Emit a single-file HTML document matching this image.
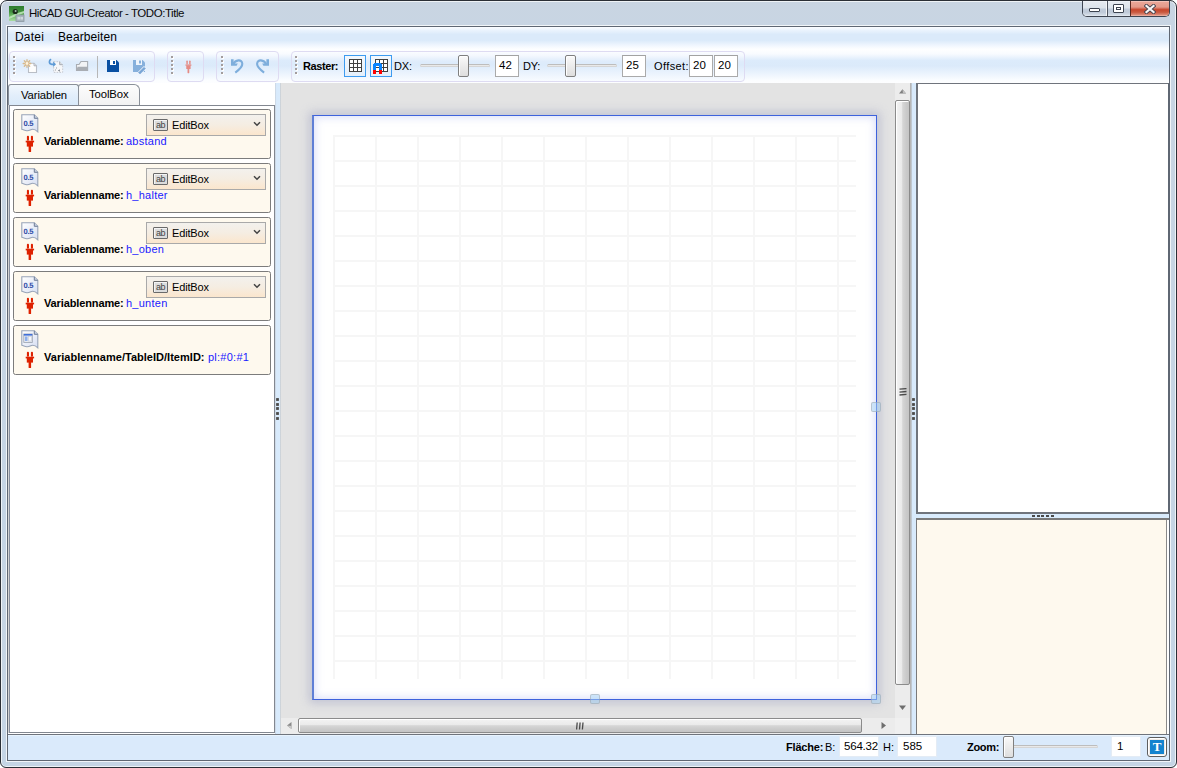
<!DOCTYPE html>
<html><head><meta charset="utf-8">
<style>
*{margin:0;padding:0;box-sizing:border-box}
html,body{width:1177px;height:768px;overflow:hidden;background:#fff;font-family:"Liberation Sans",sans-serif;font-size:11px;color:#000}
.a{position:absolute}
.t{position:absolute;white-space:nowrap;line-height:1}
#frame{left:0;top:0;width:1177px;height:768px;border:1px solid #2b2f36;border-radius:7px 7px 6px 6px;
 background:linear-gradient(180deg,#c9d5e2 0px,#c8d5e3 26px,#c5d5e5 100%);box-shadow:inset 0 0 0 1px rgba(255,255,255,.7)}
#client{left:7px;top:26px;width:1163px;height:735px;border:1px solid #5f6773;background:#fff}
#menubar{left:8px;top:27px;width:1161px;height:23px;background:linear-gradient(180deg,#fbfdff 0%,#eaf3fd 15%,#dbeafa 32%,#dbeafa 58%,#f0f6fe 80%,#fdfeff 96%)}
#tray{left:8px;top:50px;width:1161px;height:33px;background:linear-gradient(180deg,#fdfeff 0%,#f8fbff 12%,#dcebfb 32%,#dbeafa 48%,#eaf3fd 70%,#fbfdff 92%,#fdfeff 100%)}
.tb{position:absolute;top:51px;height:31px;border:1px solid #dedbf2;border-radius:4px;background:linear-gradient(180deg,#fafcff 0%,#f4f8fe 12%,#dfecfb 32%,#dcebfb 45%,#e9f2fd 70%,#f8fbff 100%)}
.grip{position:absolute;top:4px;width:3px;height:19px;background:repeating-linear-gradient(180deg,#a39d9d 0 2px,transparent 2px 4px) 0 0/2px 100% no-repeat,repeating-linear-gradient(180deg,transparent 0 1px,#fff 1px 3px,transparent 3px 4px) 1px 0/2px 100% no-repeat}
.btn{width:22px;height:22px;border:1px solid #3d9bf0;background:linear-gradient(180deg,#f3f8fd,#e3effb)}
.track{height:3px;border:1px solid #d5d5d5;border-radius:2px;background:#e9e9e9;border-top-color:#bdbdbd}
.thumb{width:11px;height:22px;border:1px solid #7f7f7f;border-radius:2px;background:linear-gradient(180deg,#fafafa 0%,#eeeeee 40%,#dedede 100%);box-shadow:inset 1px 1px 0 #fff}
.tbox{height:22px;border:1px solid #aaa;border-top-color:#a2a2a2;background:#fff;font-size:11.5px;line-height:19px;padding-left:3px;white-space:nowrap;overflow:hidden}
.handle{width:10px;height:10px;border:1px solid rgba(150,150,150,0.4);border-radius:2px;background:rgba(165,212,245,0.5)}
.vthumb{border:1px solid #8b8b8b;border-radius:2px;background:linear-gradient(90deg,#f3f3f3 0%,#ebebeb 42%,#d6d6d6 52%,#cacaca 80%,#c5c5c5 100%);box-shadow:inset 1px 1px 0 #fff}
.hthumb{border:1px solid #8b8b8b;border-radius:2px;background:linear-gradient(180deg,#f3f3f3 0%,#ebebeb 42%,#d6d6d6 52%,#cacaca 80%,#c5c5c5 100%);box-shadow:inset 1px 1px 0 #fff}
.card{left:13px;width:258px;height:50px;border:1px solid #7c7c7c;border-radius:2.5px;background:#fef9ee}
.lbl{font-size:11px;font-weight:bold;letter-spacing:-0.12px;color:#000}
.val{font-size:11px;color:#1a1aff;letter-spacing:0.25px}
.combo{width:120px;height:22px;border:1px solid #a9a9a9;background:linear-gradient(180deg,#f3f1ed 0%,#f5ede2 50%,#fbe6cd 100%)}
.abicon{left:6px;top:4px;width:15px;height:12px;border:1.5px solid #6a6a6a;border-radius:1px;background:#dcdcdc;font-size:9px;line-height:10px;color:#444;text-align:center;box-shadow:inset 1px 1px 0 #f4f4f4;letter-spacing:-0.5px}
.gdot{width:3px;height:3px;border-radius:1px;background:#4a4a4a;box-shadow:inset 0 0 0 0.6px #666}
.gdot2{width:3px;height:2px;background:#4a4a4a}
</style></head><body>
<div id="frame" class="a"></div>
<div class="a" style="left:6px;top:25px;width:1165px;height:737px;border:1px solid rgba(255,255,255,0.75)"></div>
<div id="client" class="a"></div>
<div id="menubar" class="a"></div>
<div id="tray" class="a"></div>

<!-- title -->
<svg class="a" style="left:9px;top:6px" width="16" height="16" viewBox="0 0 16 16">
<defs><linearGradient id="gi" x1="0" y1="0" x2="0" y2="1"><stop offset="0" stop-color="#2e7d2e"/><stop offset="0.35" stop-color="#3f8f3c"/><stop offset="0.6" stop-color="#66b35f"/><stop offset="1" stop-color="#a9dca3"/></linearGradient></defs>
<rect x="0" y="0" width="15" height="15" fill="url(#gi)"/>
<path d="M0 11 C4 9 8 7 15 5 L15 7 C9 9 5 11 0 13z" fill="#c8ecc4" opacity="0.8"/>
<circle cx="6.2" cy="5.5" r="2.6" fill="#1b2b1b"/><circle cx="6.6" cy="5" r="1" fill="#dfe" opacity="0.7"/>
<rect x="7" y="9" width="8" height="6.5" fill="#a8b4bd" stroke="#8c98a2" stroke-width="0.8"/>
<rect x="8.5" y="11" width="3" height="2.5" fill="#cfd7dd"/><rect x="12" y="11" width="2" height="2.5" fill="#cfd7dd"/>
</svg>
<div class="t" style="left:29px;top:8px;font-size:11.5px;letter-spacing:-0.45px;color:#0a0a0a">HiCAD GUI-Creator - TODO:Title</div>
<!-- caption buttons -->
<div class="a" style="left:1082px;top:1px;width:88px;height:16px;border:1px solid #3f4652;border-top:none;border-radius:0 0 5px 5px;overflow:hidden;background:#fff">
  <div class="a" style="left:0;top:0;width:24px;height:15px;background:linear-gradient(180deg,#f3f6f9 0%,#e4e9ef 10%,#dde4eb 45%,#c1ccda 55%,#bfcad8 75%,#d3dce6 92%,#e6ecf2 100%);border-right:1px solid #f4f6f8"></div>
  <div class="a" style="left:24px;top:0;width:23px;height:15px;border-left:1px solid #4e5560;background:linear-gradient(180deg,#f3f6f9 0%,#e4e9ef 10%,#dde4eb 45%,#c1ccda 55%,#bfcad8 75%,#d3dce6 92%,#e6ecf2 100%)"></div>
  <div class="a" style="left:47px;top:0;width:41px;height:15px;border-left:1px solid #5b2a22;background:linear-gradient(180deg,#f7d0c8 0%,#e9a596 10%,#e39a8a 40%,#c7472d 58%,#c95a40 75%,#d98470 90%,#efbcae 100%)"></div>
  <div class="a" style="left:6px;top:7px;width:11px;height:4px;border:1px solid #3d4450;background:#fff;border-radius:1px"></div>
  <div class="a" style="left:30px;top:3px;width:11px;height:9px;border:1px solid #3d4450;background:#fff;border-radius:1px"><div class="a" style="left:2px;top:2px;width:5px;height:3px;border:1px solid #3d4450"></div></div>
  <svg class="a" style="left:61px;top:3px" width="12" height="10" viewBox="0 0 12 10"><path d="M2.5 2 L9.5 8 M9.5 2 L2.5 8" stroke="#4a4750" stroke-width="4" stroke-linecap="square"/><path d="M2.5 2 L9.5 8 M9.5 2 L2.5 8" stroke="#f6f6f6" stroke-width="2.2" stroke-linecap="square"/></svg>
</div>
<!-- menu -->
<div class="t" style="left:15px;top:31px;font-size:12px;letter-spacing:0.2px">Datei</div>
<div class="t" style="left:58px;top:31px;font-size:12px;letter-spacing:0.1px">Bearbeiten</div>

<!-- toolbar 1 -->
<div class="tb" style="left:9px;width:146px">
  <div class="grip" style="left:3px"></div>
  <!-- new -->
  <svg class="a" style="left:12px;top:6px" width="16" height="16" viewBox="0 0 16 16">
    <path d="M6.5 5.3 h5.5 l2.5 2.5 v6.7 h-8z" fill="#fdfdfd" stroke="#b9bec6" stroke-width="1.1"/>
    <path d="M12 5.3 v2.5 h2.5" fill="#e6e8ec" stroke="#a8adb6" stroke-width="0.9"/>
    <g stroke="#d9b98a" stroke-width="1.3" stroke-linecap="round"><path d="M5 1.7v7.6M1.2 5.5h7.6M2.3 2.8l5.4 5.4M7.7 2.8l-5.4 5.4"/></g>
    <circle cx="5" cy="5.5" r="1.4" fill="#fff3dc"/>
  </svg>
  <!-- copy/move -->
  <svg class="a" style="left:38px;top:6px" width="17" height="17" viewBox="0 0 17 17">
    <path d="M5.7 3.7 h6 l3 3 v7.7 h-9z" fill="#f6f7f9" stroke="#c5c9d0" stroke-width="1" stroke-dasharray="1.6 1.2"/>
    <path d="M11.7 3.7 v3 h3" fill="#dfe2e6" stroke="#9ea4ad" stroke-width="0.9"/>
    <path d="M8 10h1M7 12h1M10 12.5h2M11.5 11.5v2" stroke="#8e949c" stroke-width="0.9"/>
    <path d="M3.2 1.3 C0.8 2 0.6 6 3.8 6.3 H6" fill="none" stroke="#5d9ad6" stroke-width="1.7"/>
    <path d="M5.2 3.6 L8 6.3 L5.2 9z" fill="#5d9ad6"/>
  </svg>
  <!-- open -->
  <svg class="a" style="left:65px;top:8px" width="14" height="12" viewBox="0 0 14 12">
    <path d="M1.5 10.5 V4.5 H4 L6 1.5 H12.6 V10.5z" fill="#f2f3f5" stroke="#a9adb3" stroke-width="1.1"/>
    <path d="M1.2 10.6 L2.6 6.8 H12.8 V10.6z" fill="#a9adb3"/>
  </svg>
  <div class="a" style="left:87px;top:4px;width:1px;height:22px;background:#b7b7b7"></div>
  <!-- save -->
  <svg class="a" style="left:97px;top:8px" width="12" height="12" viewBox="0 0 12 12" shape-rendering="crispEdges">
    <path d="M0 0h9.5l2.5 2.5v9.5h-12z" fill="#0a50a2" shape-rendering="auto"/>
    <rect x="3" y="0" width="6" height="5" fill="#fff"/><rect x="6" y="0.5" width="2" height="3" fill="#0a50a2"/>
  </svg>
  <!-- save as -->
  <svg class="a" style="left:123px;top:8px" width="14" height="14" viewBox="0 0 14 14">
    <path d="M0 0h9.5l2.5 2.5v9.5h-12z" fill="#86b0dc"/>
    <rect x="3" y="0" width="6" height="5" fill="#eef4fb"/><rect x="6" y="0.5" width="2" height="3" fill="#86b0dc"/>
    <path d="M4.8 12.6 L11 6.4 L13.2 8.6 L7 14.8z" fill="#7aa6d6" stroke="#f2f7fd" stroke-width="1"/>
  </svg>
</div>
<!-- toolbar 2 -->
<div class="tb" style="left:167px;width:37px">
  <div class="grip" style="left:3px"></div>
  <svg class="a" style="left:17px;top:8px" width="7" height="14" viewBox="0 0 10 18" preserveAspectRatio="none"><g fill="#e58b85"><rect x="1.9" y="0.7" width="2.1" height="5" rx="1"/><rect x="5.9" y="0.7" width="2.1" height="5" rx="1"/><rect x="0.7" y="5.7" width="8.4" height="1.7"/><rect x="1.8" y="7" width="6.2" height="4.6"/><rect x="3.6" y="11" width="2.5" height="6" rx="0.6"/></g></svg>
</div>
<!-- toolbar 3 -->
<div class="tb" style="left:216px;width:63px">
  <div class="grip" style="left:4px"></div>
  <svg class="a" style="left:13px;top:6px" width="14" height="16" viewBox="0 0 14 16">
    <path d="M3 6.5 C5.5 1.5 12 0.8 12.3 5.8 C12.5 8.5 9.5 11.5 5.3 14.6" fill="none" stroke="#7eaedc" stroke-width="2.1"/>
    <path d="M1 1.2 L3.6 1.2 L3.6 5.4 L7.8 5.4 L6.6 7.8 L1 7.8Z" fill="#7eaedc"/>
  </svg>
  <svg class="a" style="left:39px;top:6px" width="14" height="16" viewBox="0 0 14 16">
    <g transform="translate(14,0) scale(-1,1)">
    <path d="M3 6.5 C5.5 1.5 12 0.8 12.3 5.8 C12.5 8.5 9.5 11.5 5.3 14.6" fill="none" stroke="#7eaedc" stroke-width="2.1" transform="translate(0.6,0) scale(1,1)"/>
    <path d="M1 1.2 L3.6 1.2 L3.6 5.4 L7.8 5.4 L6.6 7.8 L1 7.8Z" fill="#7eaedc"/>
    </g>
  </svg>
</div>
<!-- toolbar 4 -->
<div class="tb" style="left:291px;width:454px">
  <div class="grip" style="left:3px"></div>
</div>
<div class="t" style="left:303px;top:61px;font-size:11px;font-weight:bold;letter-spacing:-0.4px">Raster:</div>
<div class="a btn" style="left:344px;top:55px"></div>
<div class="a btn" style="left:370px;top:55px"></div>
<svg class="a" style="left:349px;top:59px" width="13" height="13" viewBox="0 0 13 13" shape-rendering="crispEdges"><rect width="13" height="13" fill="#414141"/><g fill="#fff"><rect x="1" y="1" width="3" height="3"/><rect x="5" y="1" width="3" height="3"/><rect x="9" y="1" width="3" height="3"/><rect x="1" y="5" width="3" height="3"/><rect x="5" y="5" width="3" height="3"/><rect x="9" y="5" width="3" height="3"/><rect x="1" y="9" width="3" height="3"/><rect x="5" y="9" width="3" height="3"/><rect x="9" y="9" width="3" height="3"/></g></svg>
<svg class="a" style="left:372px;top:59px" width="16" height="16" viewBox="0 0 16 16" shape-rendering="crispEdges"><rect x="3" y="0" width="13" height="13" fill="#414141"/><g fill="#fff"><rect x="4" y="1" width="3" height="3"/><rect x="8" y="1" width="3" height="3"/><rect x="12" y="1" width="3" height="3"/><rect x="4" y="5" width="3" height="3"/><rect x="8" y="5" width="3" height="3"/><rect x="12" y="5" width="3" height="3"/><rect x="4" y="9" width="3" height="3"/><rect x="8" y="9" width="3" height="3"/><rect x="12" y="9" width="3" height="3"/></g>
<path d="M1 11 V6.5 Q1 4 3.5 4 H7.5 Q10 4 10 6.5 V11 H7 V7 H4 V11z" fill="#0a84ff"/><rect x="1" y="11" width="3" height="4" fill="#f00"/><rect x="7" y="11" width="3" height="4" fill="#f00"/></svg>
<div class="t" style="left:394px;top:61px;font-size:11px;letter-spacing:-0.2px">DX:</div>
<div class="a track" style="left:420px;top:64px;width:70px"></div>
<div class="a thumb" style="left:458px;top:55px"></div>
<div class="a tbox" style="left:495px;top:55px;width:24px">42</div>
<div class="t" style="left:523px;top:61px;font-size:11px;letter-spacing:-0.2px">DY:</div>
<div class="a track" style="left:547px;top:64px;width:70px"></div>
<div class="a thumb" style="left:565px;top:55px"></div>
<div class="a tbox" style="left:622px;top:55px;width:24px">25</div>
<div class="t" style="left:654px;top:61px;font-size:11px;letter-spacing:0.4px">Offset:</div>
<div class="a tbox" style="left:689px;top:55px;width:24px">20</div>
<div class="a tbox" style="left:714px;top:55px;width:24px">20</div>


<!-- left panel -->
<div class="a" style="left:8px;top:83px;width:267px;height:651px;background:#fff"></div>
<div class="a" style="left:8px;top:84px;width:71px;height:22px;border:1px solid #8a9099;border-bottom:none;border-radius:3px 3px 0 0;background:linear-gradient(180deg,#f1f7fd 0%,#e2eefb 50%,#d9eafa 100%)"></div>
<div class="a" style="left:78px;top:84px;width:62px;height:22px;border:1px solid #8a9099;border-bottom:none;border-radius:3px 6px 0 0;background:linear-gradient(180deg,#fdfdfd 0%,#f1f1f1 100%)"></div>
<div class="t" style="left:21px;top:90px;font-size:11.3px;letter-spacing:-0.1px">Variablen</div>
<div class="t" style="left:89px;top:89px;font-size:11.3px;letter-spacing:-0.1px">ToolBox</div>
<div class="a" style="left:8px;top:105px;width:1px;height:628px;background:#d2d2d2"></div><div class="a" style="left:9px;top:105px;width:266px;height:628px;border:1px solid #828790;border-left-color:#8890a0;background:#fff"></div>
<div class="a card" style="top:109px"><svg class="a" style="left:7px;top:4px" width="18" height="19" viewBox="0 0 18 19"><defs><linearGradient id="pg" x1="0" y1="0" x2="1" y2="1"><stop offset="0" stop-color="#ffffff"/><stop offset="1" stop-color="#d6def2"/></linearGradient></defs><path d="M0.8 0.8 h12.5 l3.5 3.5 v13.5 c-1.5 -1.5 -3 -2.5 -5 -2.5 c-2.5 0 -3 1.8 -6 1.5 c-2 -0.3 -3 -1 -5 -1.5z" fill="url(#pg)" stroke="#98a4b8" stroke-width="1.1"/><path d="M13.3 0.8 v3.5 h3.5" fill="#c8d0e0" stroke="#6f7d96" stroke-width="1"/><text x="2.6" y="12" font-family="Liberation Sans" font-weight="bold" font-size="7.6" letter-spacing="-0.3" fill="#2d4aa6" text-rendering="geometricPrecision">0.5</text></svg><svg class="a" style="left:11px;top:25px" width="10" height="18" viewBox="0 0 10 18"><g fill="#de2200"><rect x="1.9" y="0.7" width="2.1" height="5" rx="1"/><rect x="5.9" y="0.7" width="2.1" height="5" rx="1"/><rect x="0.7" y="5.7" width="8.4" height="1.7"/><rect x="1.8" y="7" width="6.2" height="4.6"/><rect x="3.6" y="11" width="2.5" height="6" rx="0.6"/></g></svg><div class="t lbl" style="left:30px;top:26px">Variablenname:</div><div class="t val" style="left:112px;top:26px">abstand</div><div class="a combo" style="left:132px;top:4px"><div class="a abicon"><span>ab</span></div><div class="t" style="left:25px;top:5px;font-size:11px;letter-spacing:-0.15px">EditBox</div><svg class="a" style="left:106px;top:6px" width="8" height="6" viewBox="0 0 8 6"><path d="M1 1.3 L4 4.3 L7 1.3" fill="none" stroke="#444" stroke-width="1.5"/></svg></div></div>
<div class="a card" style="top:163px"><svg class="a" style="left:7px;top:4px" width="18" height="19" viewBox="0 0 18 19"><defs><linearGradient id="pg" x1="0" y1="0" x2="1" y2="1"><stop offset="0" stop-color="#ffffff"/><stop offset="1" stop-color="#d6def2"/></linearGradient></defs><path d="M0.8 0.8 h12.5 l3.5 3.5 v13.5 c-1.5 -1.5 -3 -2.5 -5 -2.5 c-2.5 0 -3 1.8 -6 1.5 c-2 -0.3 -3 -1 -5 -1.5z" fill="url(#pg)" stroke="#98a4b8" stroke-width="1.1"/><path d="M13.3 0.8 v3.5 h3.5" fill="#c8d0e0" stroke="#6f7d96" stroke-width="1"/><text x="2.6" y="12" font-family="Liberation Sans" font-weight="bold" font-size="7.6" letter-spacing="-0.3" fill="#2d4aa6" text-rendering="geometricPrecision">0.5</text></svg><svg class="a" style="left:11px;top:25px" width="10" height="18" viewBox="0 0 10 18"><g fill="#de2200"><rect x="1.9" y="0.7" width="2.1" height="5" rx="1"/><rect x="5.9" y="0.7" width="2.1" height="5" rx="1"/><rect x="0.7" y="5.7" width="8.4" height="1.7"/><rect x="1.8" y="7" width="6.2" height="4.6"/><rect x="3.6" y="11" width="2.5" height="6" rx="0.6"/></g></svg><div class="t lbl" style="left:30px;top:26px">Variablenname:</div><div class="t val" style="left:112px;top:26px">h_halter</div><div class="a combo" style="left:132px;top:4px"><div class="a abicon"><span>ab</span></div><div class="t" style="left:25px;top:5px;font-size:11px;letter-spacing:-0.15px">EditBox</div><svg class="a" style="left:106px;top:6px" width="8" height="6" viewBox="0 0 8 6"><path d="M1 1.3 L4 4.3 L7 1.3" fill="none" stroke="#444" stroke-width="1.5"/></svg></div></div>
<div class="a card" style="top:217px"><svg class="a" style="left:7px;top:4px" width="18" height="19" viewBox="0 0 18 19"><defs><linearGradient id="pg" x1="0" y1="0" x2="1" y2="1"><stop offset="0" stop-color="#ffffff"/><stop offset="1" stop-color="#d6def2"/></linearGradient></defs><path d="M0.8 0.8 h12.5 l3.5 3.5 v13.5 c-1.5 -1.5 -3 -2.5 -5 -2.5 c-2.5 0 -3 1.8 -6 1.5 c-2 -0.3 -3 -1 -5 -1.5z" fill="url(#pg)" stroke="#98a4b8" stroke-width="1.1"/><path d="M13.3 0.8 v3.5 h3.5" fill="#c8d0e0" stroke="#6f7d96" stroke-width="1"/><text x="2.6" y="12" font-family="Liberation Sans" font-weight="bold" font-size="7.6" letter-spacing="-0.3" fill="#2d4aa6" text-rendering="geometricPrecision">0.5</text></svg><svg class="a" style="left:11px;top:25px" width="10" height="18" viewBox="0 0 10 18"><g fill="#de2200"><rect x="1.9" y="0.7" width="2.1" height="5" rx="1"/><rect x="5.9" y="0.7" width="2.1" height="5" rx="1"/><rect x="0.7" y="5.7" width="8.4" height="1.7"/><rect x="1.8" y="7" width="6.2" height="4.6"/><rect x="3.6" y="11" width="2.5" height="6" rx="0.6"/></g></svg><div class="t lbl" style="left:30px;top:26px">Variablenname:</div><div class="t val" style="left:112px;top:26px">h_oben</div><div class="a combo" style="left:132px;top:4px"><div class="a abicon"><span>ab</span></div><div class="t" style="left:25px;top:5px;font-size:11px;letter-spacing:-0.15px">EditBox</div><svg class="a" style="left:106px;top:6px" width="8" height="6" viewBox="0 0 8 6"><path d="M1 1.3 L4 4.3 L7 1.3" fill="none" stroke="#444" stroke-width="1.5"/></svg></div></div>
<div class="a card" style="top:271px"><svg class="a" style="left:7px;top:4px" width="18" height="19" viewBox="0 0 18 19"><defs><linearGradient id="pg" x1="0" y1="0" x2="1" y2="1"><stop offset="0" stop-color="#ffffff"/><stop offset="1" stop-color="#d6def2"/></linearGradient></defs><path d="M0.8 0.8 h12.5 l3.5 3.5 v13.5 c-1.5 -1.5 -3 -2.5 -5 -2.5 c-2.5 0 -3 1.8 -6 1.5 c-2 -0.3 -3 -1 -5 -1.5z" fill="url(#pg)" stroke="#98a4b8" stroke-width="1.1"/><path d="M13.3 0.8 v3.5 h3.5" fill="#c8d0e0" stroke="#6f7d96" stroke-width="1"/><text x="2.6" y="12" font-family="Liberation Sans" font-weight="bold" font-size="7.6" letter-spacing="-0.3" fill="#2d4aa6" text-rendering="geometricPrecision">0.5</text></svg><svg class="a" style="left:11px;top:25px" width="10" height="18" viewBox="0 0 10 18"><g fill="#de2200"><rect x="1.9" y="0.7" width="2.1" height="5" rx="1"/><rect x="5.9" y="0.7" width="2.1" height="5" rx="1"/><rect x="0.7" y="5.7" width="8.4" height="1.7"/><rect x="1.8" y="7" width="6.2" height="4.6"/><rect x="3.6" y="11" width="2.5" height="6" rx="0.6"/></g></svg><div class="t lbl" style="left:30px;top:26px">Variablenname:</div><div class="t val" style="left:112px;top:26px">h_unten</div><div class="a combo" style="left:132px;top:4px"><div class="a abicon"><span>ab</span></div><div class="t" style="left:25px;top:5px;font-size:11px;letter-spacing:-0.15px">EditBox</div><svg class="a" style="left:106px;top:6px" width="8" height="6" viewBox="0 0 8 6"><path d="M1 1.3 L4 4.3 L7 1.3" fill="none" stroke="#444" stroke-width="1.5"/></svg></div></div>
<div class="a card" style="top:325px"><svg class="a" style="left:7px;top:4px" width="18" height="19" viewBox="0 0 18 19"><path d="M0.8 0.8 h12.5 l3.5 3.5 v13.5 c-1.5 -1.5 -3 -2.5 -5 -2.5 c-2.5 0 -3 1.8 -6 1.5 c-2 -0.3 -3 -1 -5 -1.5z" fill="url(#pg)" stroke="#98a4b8" stroke-width="1.1"/><path d="M13.3 0.8 v3.5 h3.5" fill="#c8d0e0" stroke="#6f7d96" stroke-width="1"/><rect x="2.8" y="4" width="8.5" height="8.5" fill="#e6eaf2" stroke="#9aa2b0" stroke-width="0.8"/><rect x="2.8" y="4" width="8.5" height="1.6" fill="#3f6fd8"/><rect x="4" y="6.5" width="2.5" height="4.5" fill="#8fb0ea"/><rect x="7.5" y="6.5" width="3" height="4.5" fill="#f4f6fa" stroke="#c0c6d0" stroke-width="0.5"/></svg><svg class="a" style="left:11px;top:25px" width="10" height="18" viewBox="0 0 10 18"><g fill="#de2200"><rect x="1.9" y="0.7" width="2.1" height="5" rx="1"/><rect x="5.9" y="0.7" width="2.1" height="5" rx="1"/><rect x="0.7" y="5.7" width="8.4" height="1.7"/><rect x="1.8" y="7" width="6.2" height="4.6"/><rect x="3.6" y="11" width="2.5" height="6" rx="0.6"/></g></svg><div class="t lbl" style="left:30px;top:26px;letter-spacing:0.02px">Variablenname/TableID/ItemID:</div><div class="t val" style="left:194px;top:26px">pl:#0:#1</div></div>
<!-- left splitter -->
<div class="a" style="left:275px;top:83px;width:6px;height:651px;background:linear-gradient(90deg,#c9d2dc 0%,#d7e9fb 25%,#d9ebfc 75%,#c8c8c8 100%)"></div>
<!-- canvas area -->
<div class="a" style="left:281px;top:83px;width:614px;height:635px;background:#e3e3e3;overflow:hidden">
<div class="a" style="left:31px;top:32px;width:565px;height:585px;box-shadow:0 0 9px 3px rgba(150,155,190,0.45)"></div>
<div class="a" style="left:31px;top:32px;width:565px;height:585px;background:#fff;border:1px solid #3e62dc;border-left:2px solid #5f7fd6;box-shadow:inset 0 0 9px 1px rgba(200,205,245,0.7)"></div>
<svg class="a" style="left:-281px;top:-83px" width="1177" height="768" shape-rendering="crispEdges"><g fill="#f6f6f6"><rect x="333" y="135" width="2" height="544"/><rect x="375" y="135" width="2" height="544"/><rect x="417" y="135" width="2" height="544"/><rect x="459" y="135" width="2" height="544"/><rect x="501" y="135" width="2" height="544"/><rect x="543" y="135" width="2" height="544"/><rect x="585" y="135" width="2" height="544"/><rect x="627" y="135" width="2" height="544"/><rect x="669" y="135" width="2" height="544"/><rect x="711" y="135" width="2" height="544"/><rect x="753" y="135" width="2" height="544"/><rect x="795" y="135" width="2" height="544"/><rect x="837" y="135" width="2" height="544"/><rect x="333" y="135" width="523" height="2"/><rect x="333" y="160" width="523" height="2"/><rect x="333" y="185" width="523" height="2"/><rect x="333" y="210" width="523" height="2"/><rect x="333" y="235" width="523" height="2"/><rect x="333" y="260" width="523" height="2"/><rect x="333" y="285" width="523" height="2"/><rect x="333" y="310" width="523" height="2"/><rect x="333" y="335" width="523" height="2"/><rect x="333" y="360" width="523" height="2"/><rect x="333" y="385" width="523" height="2"/><rect x="333" y="410" width="523" height="2"/><rect x="333" y="435" width="523" height="2"/><rect x="333" y="460" width="523" height="2"/><rect x="333" y="485" width="523" height="2"/><rect x="333" y="510" width="523" height="2"/><rect x="333" y="535" width="523" height="2"/><rect x="333" y="560" width="523" height="2"/><rect x="333" y="585" width="523" height="2"/><rect x="333" y="610" width="523" height="2"/><rect x="333" y="635" width="523" height="2"/><rect x="333" y="660" width="523" height="2"/></g></svg>
<div class="a handle" style="left:590px;top:319px"></div>
<div class="a handle" style="left:309px;top:611px"></div>
<div class="a handle" style="left:590px;top:611px"></div>
</div>
<!-- v scrollbar -->
<div class="a" style="left:895px;top:83px;width:16px;height:651px;background:#ececec"></div>
<div class="a" style="left:895px;top:718px;width:16px;height:16px;background:#f0f0f0"></div>
<svg class="a" style="left:898px;top:88px" width="9" height="6" viewBox="0 0 9 6"><path d="M1 5.5 L4.5 1.2 L8 5.5z" fill="#808080"/><path d="M4.5 1.2 L8 5.5 h-3z" fill="#c0c0c0"/></svg>
<svg class="a" style="left:898px;top:705px" width="9" height="6" viewBox="0 0 9 6"><path d="M1 0.5 L8 0.5 L4.5 5z" fill="#6e6e6e"/></svg>
<div class="a vthumb" style="left:895px;top:100px;width:15px;height:585px"></div>
<svg class="a" style="left:899px;top:388px" width="8" height="8" viewBox="0 0 8 8"><path d="M0.5 1.2 L7.5 0.6 M0.5 4.1 L7.5 3.5 M0.5 7 L7.5 6.4" stroke="#4a4a4a" stroke-width="1.3"/></svg>
<!-- h scrollbar -->
<div class="a" style="left:281px;top:718px;width:614px;height:16px;background:#ececec"></div>
<svg class="a" style="left:286px;top:721px" width="6" height="9" viewBox="0 0 6 9"><path d="M5.5 1 L1 4.5 L5.5 8z" fill="#8a8a8a"/><path d="M1 4.5 L5.5 8 v-3z" fill="#c8c8c8"/></svg>
<svg class="a" style="left:881px;top:721px" width="6" height="9" viewBox="0 0 6 9"><path d="M0.5 1 L5 4.5 L0.5 8z" fill="#6e6e6e"/></svg>
<div class="a hthumb" style="left:298px;top:718px;width:564px;height:15px"></div>
<svg class="a" style="left:576px;top:722px" width="8" height="8" viewBox="0 0 8 8"><path d="M1.2 0.5 L0.6 7.5 M4.1 0.5 L3.5 7.5 M7 0.5 L6.4 7.5" stroke="#4a4a4a" stroke-width="1.3"/></svg>
<!-- right splitter -->
<div class="a" style="left:910px;top:83px;width:7px;height:651px;background:linear-gradient(90deg,#c4c4c4 0%,#a9a9a9 14%,#d7e9fb 30%,#d9ebfc 85%,#c9d2dc 100%)"></div>
<!-- right top panel -->
<div class="a" style="left:916px;top:83px;width:253px;height:431px;border:2px solid #6f747c;border-top:1px solid #6f747c;border-right:1px solid #5f6773;background:#fff"></div>
<div class="a" style="left:916px;top:514px;width:253px;height:4px;background:#d9ebfc"></div>
<div class="a" style="left:916px;top:518px;width:253px;height:216px;border:1px solid #7a7a7a;border-top:2px solid #7a7a7a;border-right:none;border-bottom:none;background:#fef9ee"></div>
<div class="a" style="left:1166px;top:520px;width:3px;height:214px;border-left:1px solid #8a8a8a;background:#fff"></div>
<div class="a gdot" style="left:276px;top:398px"></div><div class="a gdot" style="left:912px;top:398px"></div><div class="a gdot2" style="left:1032px;top:515px"></div><div class="a gdot" style="left:276px;top:403px"></div><div class="a gdot" style="left:912px;top:403px"></div><div class="a gdot2" style="left:1037px;top:515px"></div><div class="a gdot" style="left:276px;top:407px"></div><div class="a gdot" style="left:912px;top:407px"></div><div class="a gdot2" style="left:1041px;top:515px"></div><div class="a gdot" style="left:276px;top:412px"></div><div class="a gdot" style="left:912px;top:412px"></div><div class="a gdot2" style="left:1046px;top:515px"></div><div class="a gdot" style="left:276px;top:417px"></div><div class="a gdot" style="left:912px;top:417px"></div><div class="a gdot2" style="left:1051px;top:515px"></div>
<!-- status bar -->
<div class="a" style="left:8px;top:734px;width:1161px;height:26px;border-top:1px solid #6f747c;background:#daeafb;box-shadow:inset 0 1px 0 #e8f3fd"></div>

<div class="t" style="left:786px;top:742px;font-size:11px;font-weight:bold;letter-spacing:-0.2px">Fläche:</div>
<div class="t" style="left:825px;top:742px;font-size:11px;letter-spacing:0px">B:</div>
<div class="a tbox" style="left:839px;top:736px;width:40px;height:21px;border-color:#e4ecf5;padding-left:4px;line-height:19px;letter-spacing:-0.2px">564.32</div>
<div class="t" style="left:883px;top:742px;font-size:11px">H:</div>
<div class="a tbox" style="left:897px;top:736px;width:40px;height:21px;border-color:#e4ecf5;padding-left:5px;line-height:19px">585</div>
<div class="t" style="left:967px;top:742px;font-size:11px;font-weight:bold;letter-spacing:-0.3px">Zoom:</div>
<div class="a track" style="left:1010px;top:745px;width:88px"></div>
<div class="a thumb" style="left:1003px;top:736px;height:22px"></div>
<div class="a tbox" style="left:1111px;top:736px;width:30px;height:21px;border-color:#e4ecf5;padding-left:5px;line-height:19px">1</div>
<div class="a" style="left:1147px;top:737px;width:20px;height:20px;border:1px solid #5e5e5e;border-radius:3px;background:#eeeae6;box-shadow:inset 0 0 0 1px #fff"></div>
<div class="a" style="left:1150px;top:740px;width:14px;height:14px;background:#1383cf"></div>
<div class="t" style="left:1151px;top:740px;width:12px;text-align:center;font-family:'Liberation Serif',serif;font-weight:bold;font-size:13px;color:#fff">T</div>
</body></html>
